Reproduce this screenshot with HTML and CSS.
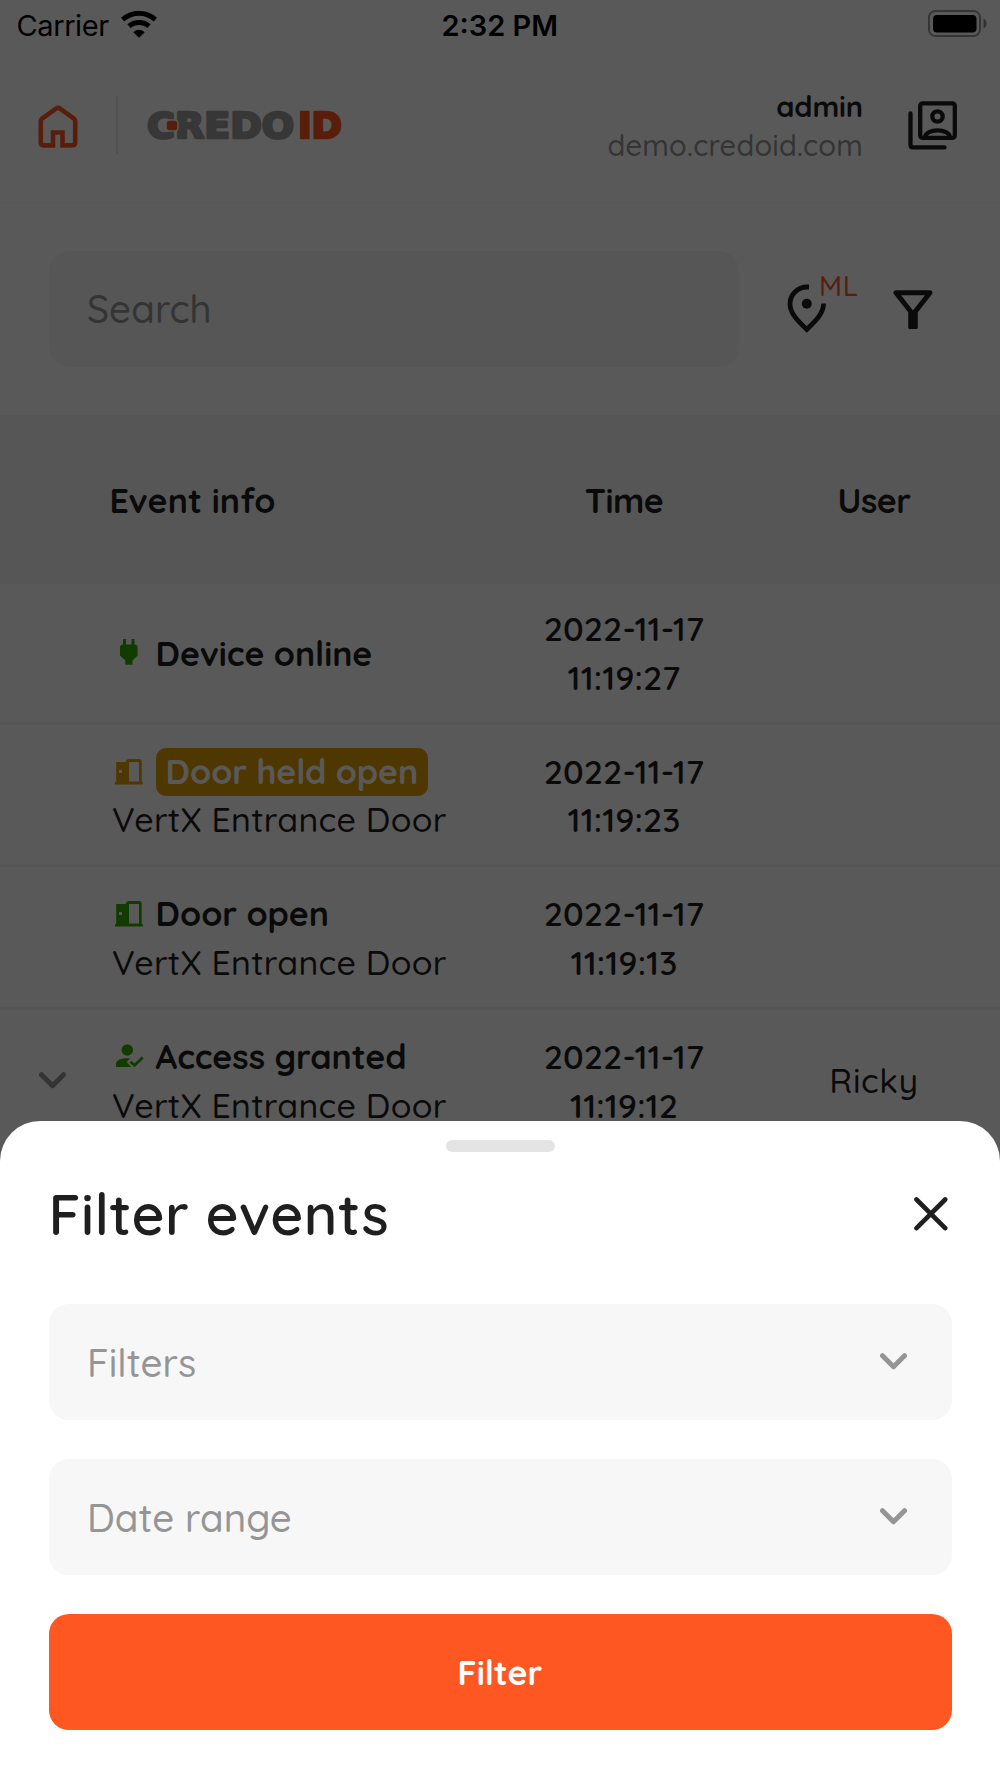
FILE: index.html
```html
<!DOCTYPE html>
<html lang="en">
<head>
<meta charset="utf-8">
<title>CredoID</title>
<link rel="stylesheet" href="styles.css">
</head>
<body>
<div class="screen">
  <div class="status">
    <div class="carrier">
      <span>Carrier</span>
      <svg class="wifi" width="38" height="28" viewBox="0 0 38 28">
        <g fill="none" stroke="#000" stroke-width="5">
          <path d="M2.600 9.600Q10 3.300 19 3.300T35.400 9.600"/>
          <path d="M9 16.200Q13.200 12.500 19 12.500T29 16.200"/>
        </g>
        <path d="M13.300 22.200Q19 17.400 24.700 22.200L19 27.700Z"/>
      </svg>
    </div>
    <div class="clock">2:32 PM</div>
    <svg class="battery" width="60" height="28" viewBox="0 0 60 28">
      <rect x="1" y="1" width="51" height="25" rx="6.500" fill="none" stroke="#000" stroke-opacity=".4" stroke-width="2"/>
      <rect x="5" y="5" width="43.500" height="17.500" rx="4"/>
      <path d="M55.500 8.500Q58.500 10 58.500 13.500T55.500 18.500Z" opacity=".45"/>
    </svg>
  </div>

  <header class="topbar">
    <svg class="home" width="40" height="44" viewBox="0 0 40 44">
      <path d="M20 2.800Q20.800 2.800 22 3.700L36 13.500Q37.200 14.400 37.200 16V37.500Q37.200 40.400 34.300 40.400H24.500V27.500H15V40.400H5.700Q2.800 40.400 2.800 37.500V16Q2.800 14.400 4 13.500L18 3.700Q19.200 2.800 20 2.800Z" fill="none" stroke="#ff5722" stroke-width="4.600"/>
    </svg>
    <div class="divider"></div>
    <svg class="logo" width="204" height="48" viewBox="0 0 204 48">
      <text class="logo-text" x="1" y="36.700" textLength="147" lengthAdjust="spacingAndGlyphs" fill="#9d9d9d" stroke="#9d9d9d">CREDO</text>
      <text class="logo-text" x="152" y="36.700" textLength="44" lengthAdjust="spacingAndGlyphs" fill="#ff5722" stroke="#ff5722">ID</text>
      <rect x="20" y="19" width="12" height="11" rx="3.500" fill="#ff5722" stroke="#fff" stroke-width="1.500"/>
    </svg>
    <div class="account">
      <div class="account-name">admin</div>
      <div class="account-host">demo.credoid.com</div>
    </div>
    <svg class="contacts" width="50" height="50" viewBox="0 0 50 50" fill="none" stroke="#1f1f1f" stroke-width="4.300" stroke-linecap="round" stroke-linejoin="round">
      <rect x="12.200" y="2.300" width="34.600" height="34.600" rx="2.500"/>
      <path d="M2.500 12.500V44Q2.500 46.400 5 46.400H36.500"/>
      <circle cx="29.500" cy="15.500" r="5.200"/>
      <path d="M17 36.500C17.500 27 41.500 27 42 36.500"/>
    </svg>
  </header>

  <div class="searchbar">
    <div class="search">Search</div>
    <div class="pin">
      <svg width="40" height="50" viewBox="0 0 40 50">
        <path d="M22 3H20C10.500 3 3 10.500 3 20C3 30 12.500 38.500 19.800 45.500C27 38.500 36.600 30 36.600 19.500" fill="none" stroke="#1f1f1f" stroke-width="4.800"/>
        <circle cx="19.800" cy="19.700" r="5" fill="#1f1f1f"/>
      </svg>
      <span class="pin-badge">ML</span>
    </div>
    <svg class="funnel" width="40" height="40" viewBox="0 0 40 40">
      <path d="M3 2.800H37L21.500 22.500V36.500H18.500V22.500Z" fill="none" stroke="#1f1f1f" stroke-width="5" stroke-linejoin="round"/>
      <rect x="15.200" y="22" width="9.600" height="17" rx="1.500" fill="#1f1f1f"/>
    </svg>
  </div>

  <div class="grid head">
    <div></div>
    <div class="head-event">Event info</div>
    <div class="cell-mid">Time</div>
    <div class="cell-mid">User</div>
  </div>

  <div class="grid row">
    <div></div>
    <div>
      <div class="event">
        <svg class="icon" viewBox="0 0 32 32" fill="#36aa00"><path d="M10 3H13V8.500H18.500V3H21.500V8.500Q24.600 8.500 24.600 11.500V19.500L19.500 24.500V28.800H12.300V24.500L7 19.500V11.500Q7 8.500 10 8.500Z"/></svg>
        <span class="name">Device online</span>
      </div>
    </div>
    <div class="cell-mid"><div class="date">2022-11-17</div><div class="date">11:19:27</div></div>
    <div></div>
  </div>

  <div class="grid row">
    <div></div>
    <div>
      <div class="event">
        <svg class="icon" viewBox="0 0 32 32" fill="#df9d00" fill-rule="evenodd"><path d="M3.200 7H12.500Q13.500 4 16 4H26Q28.700 4 28.700 6.700V27H30V29.500H2V27H3.200ZM16 7V26.500H26V7ZM6 15V18H9V15Z"/></svg>
        <span class="name badge">Door held open</span>
      </div>
      <div class="place">VertX Entrance Door</div>
    </div>
    <div class="cell-mid"><div class="date">2022-11-17</div><div class="date">11:19:23</div></div>
    <div></div>
  </div>

  <div class="grid row">
    <div></div>
    <div>
      <div class="event">
        <svg class="icon" viewBox="0 0 32 32" fill="#36aa00" fill-rule="evenodd"><path d="M3.200 7H12.500Q13.500 4 16 4H26Q28.700 4 28.700 6.700V27H30V29.500H2V27H3.200ZM16 7V26.500H26V7ZM6 15V18H9V15Z"/></svg>
        <span class="name">Door open</span>
      </div>
      <div class="place">VertX Entrance Door</div>
    </div>
    <div class="cell-mid"><div class="date">2022-11-17</div><div class="date">11:19:13</div></div>
    <div></div>
  </div>

  <div class="grid row">
    <div class="expand"><svg width="27" height="17" viewBox="0 0 27 17"><path d="M2.500 2.700L13.500 13.700L24.500 2.700"/></svg></div>
    <div>
      <div class="event">
        <svg class="icon" viewBox="0 0 32 32" fill="#36aa00"><circle cx="14.300" cy="10" r="5.800"/><path d="M3 27V24C3 19 11 17.600 17 18.500L13.800 22L18 27Z"/><path d="M17.500 21.700L21.500 25.300L29.700 17.500" fill="none" stroke="#36aa00" stroke-width="2.700"/></svg>
        <span class="name">Access granted</span>
      </div>
      <div class="place">VertX Entrance Door</div>
    </div>
    <div class="cell-mid"><div class="date">2022-11-17</div><div class="date">11:19:12</div></div>
    <div class="cell-mid user">Ricky</div>
  </div>

  <div class="overlay"></div>

  <section class="sheet">
    <div class="handle"></div>
    <div class="sheet-head">
      <h1 class="title">Filter events</h1>
      <svg class="close" width="34" height="34" viewBox="0 0 34 34"><path d="M2.500 2.500L31.200 31.200M31.200 2.500L2.500 31.200" stroke="#1f1f1f" stroke-width="4.600" stroke-linecap="round"/></svg>
    </div>
    <div class="form">
      <div class="field">
        <span>Filters</span>
        <svg width="27" height="17" viewBox="0 0 27 17"><path d="M2.500 2.700L13.500 13.700L24.500 2.700"/></svg>
      </div>
      <div class="field">
        <span>Date range</span>
        <svg width="27" height="17" viewBox="0 0 27 17"><path d="M2.500 2.700L13.500 13.700L24.500 2.700"/></svg>
      </div>
      <button class="submit">Filter</button>
    </div>
  </section>
</div>
</body>
</html>
```
FILE: styles.css
```css
* { box-sizing: border-box; }

body {
  margin: 0;
  font-family: Quicksand, Lato, sans-serif;
  font-weight: 500;
  color: #1f1f1f;
  background: #fff;
}

svg { display: block; flex: none; }

.screen {
  position: relative;
  width: 1000px;
  height: 1778px;
  overflow: hidden;
}

/* Status bar */
.status {
  display: grid;
  grid-template-columns: 1fr auto 1fr;
  align-items: center;
  height: 48px;
  padding: 0 12px 0 16.5px;
  font-family: Inter, sans-serif;
  font-size: 29px;
  font-weight: 400;
  color: #000;
}

.carrier {
  display: flex;
  gap: 11px;
  padding-top: 2px;
  letter-spacing: -0.4px;
}

.wifi { margin-top: 2px; }
.clock { padding: 2px 5px 0 0; font-weight: 600; }
.battery { justify-self: end; }

/* Top bar */
.topbar {
  display: flex;
  align-items: center;
  height: 155px;
  padding: 0 42px 0 38px;
  border-bottom: 1px solid #f9f9f9;
}

.home { margin-top: 3px; }
.divider { width: 2px; height: 58px; margin: 0 28px 0 38px; background: #e9e9e9; }
.logo-text { font: 700 35px "DejaVu Sans", sans-serif; stroke-width: 2.6px; stroke-linejoin: round; }

.account {
  margin: 1px 45px 0 auto;
  font-size: 29px;
  line-height: 38.5px;
  text-align: right;
}

.account-name { font-weight: 700; letter-spacing: -0.1px; }
.account-host { color: #959595; letter-spacing: 0.2px; }
.contacts { margin-top: 1px; }

/* Search bar */
.searchbar {
  display: flex;
  align-items: center;
  height: 212px;
  padding: 0 67.5px 0 48.5px;
}

.search {
  width: 690px;
  height: 116px;
  padding-left: 38.5px;
  border-radius: 20px;
  background: #f7f7f7;
  color: #959595;
  font-size: 38.5px;
  line-height: 115px;
}

.pin { position: relative; margin-left: 48px; }

.pin-badge {
  position: absolute;
  left: 32.5px;
  top: -16px;
  font-size: 28px;
  letter-spacing: 0.6px;
  color: #ff5722;
}

.funnel { margin-left: auto; margin-top: 1px; }

/* Event table */
.grid {
  display: grid;
  grid-template-columns: 113px 385px 252px 248px;
  align-items: center;
  font-size: 34px;
  line-height: 48.5px;
}

.head {
  height: 169px;
  padding-top: 3px;
  background: #f7f7f7;
  font-weight: 700;
  letter-spacing: -0.5px;
}

.head-event { margin-left: -3.5px; letter-spacing: 0.1px; }

.row {
  height: 142.6px;
  padding-top: 4px;
  border-bottom: 3px solid #f0f0f0;
}

.head + .row { margin-top: -2px; }
.cell-mid { text-align: center; }
.event { display: flex; align-items: center; gap: 10.5px; height: 48.5px; }
.icon { width: 32px; height: 32px; margin-top: -3px; }
.name { font-weight: 700; letter-spacing: -0.08px; }

.badge {
  padding: 0 10px;
  border-radius: 10px;
  background: #df9d00;
  color: #fff;
}

.place { margin-left: -1px; letter-spacing: 0.26px; }
.date { font-weight: 600; letter-spacing: 0.1px; }
.user { letter-spacing: 0.6px; }
.expand { padding-left: 39px; margin-top: -3px; }

.expand path,
.field path {
  fill: none;
  stroke: #959595;
  stroke-width: 5px;
  stroke-linecap: round;
  stroke-linejoin: round;
}

/* Bottom sheet */
.overlay {
  position: absolute;
  inset: 0;
  background: rgba(0, 0, 0, 0.65);
}

.sheet {
  position: absolute;
  left: 0;
  right: 0;
  bottom: 0;
  height: 657px;
  padding: 19px 48.5px 0;
  border-radius: 40px 40px 0 0;
  background: #fff;
}

.handle {
  width: 109px;
  height: 12px;
  margin: 0 auto;
  border-radius: 6px;
  background: #e4e4e4;
}

.sheet-head {
  display: flex;
  align-items: center;
  justify-content: space-between;
  height: 122px;
  margin-bottom: 30px;
  padding-right: 4px;
}

.title {
  margin: 0;
  font-size: 57px;
  font-weight: 600;
  letter-spacing: 0.4px;
}

.close { margin-top: 1px; }

.form { display: flex; flex-direction: column; gap: 39px; }

.field {
  display: flex;
  align-items: center;
  justify-content: space-between;
  height: 116px;
  padding: 0 44.5px 0 38.5px;
  border-radius: 20px;
  background: #f7f7f7;
  color: #959595;
  font-size: 38.5px;
  letter-spacing: 0.05px;
}

.field svg { margin-top: -1px; }

.submit {
  height: 116px;
  padding: 0;
  border: 0;
  border-radius: 20px;
  background: #ff5722;
  color: #fff;
  font: 700 34px Quicksand, Lato, sans-serif;
}
```
